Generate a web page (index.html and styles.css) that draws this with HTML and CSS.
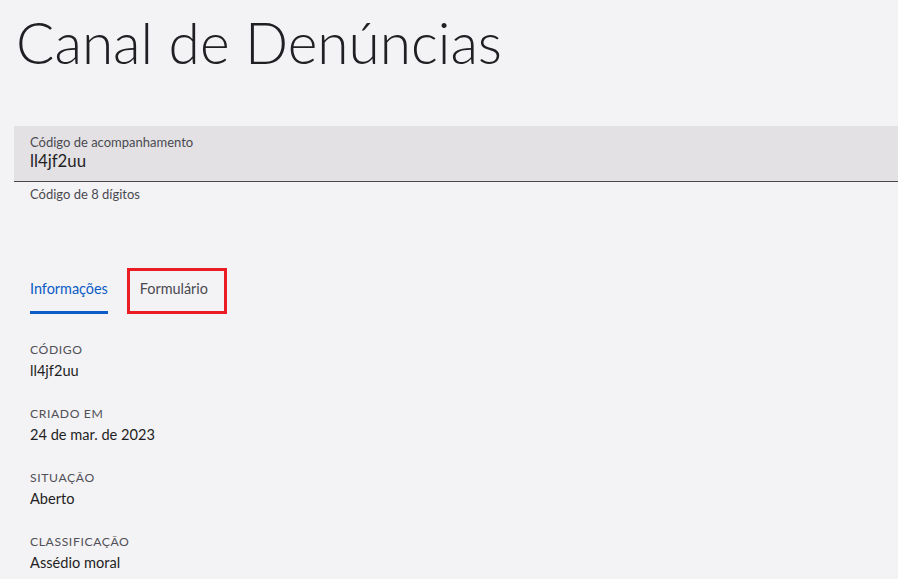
FILE: index.html
```html
<!DOCTYPE html>
<html lang="pt-BR">
<head>
    <meta charset="UTF-8">
    <meta name="viewport" content="width=device-width, initial-scale=1.0">
    <title>Canal de Denúncias</title>
    <link rel="stylesheet" href="styles.css">
</head>
<body>
    <div class="page">
        <h1 class="title">Canal de Denúncias</h1>

        <div class="field">
            <div class="field-box">
                <label class="field-label" for="codigo">Código de acompanhamento</label>
                <input id="codigo" class="field-input" type="text" value="ll4jf2uu">
            </div>
            <div class="field-help">Código de 8 dígitos</div>
        </div>

        <div class="tabs">
            <div class="tab tab-active">Informações</div>
            <div class="tab tab-marked">Formulário</div>
        </div>

        <div class="info">
            <div class="info-item">
                <div class="info-label">Código</div>
                <div class="info-value">ll4jf2uu</div>
            </div>
            <div class="info-item">
                <div class="info-label">Criado em</div>
                <div class="info-value">24 de mar. de 2023</div>
            </div>
            <div class="info-item">
                <div class="info-label">Situação</div>
                <div class="info-value">Aberto</div>
            </div>
            <div class="info-item">
                <div class="info-label">Classificação</div>
                <div class="info-value">Assédio moral</div>
            </div>
        </div>
    </div>
</body>
</html>
```

FILE: styles.css
```css
body {
    margin: 0;
    background: #f3f2f5;
    font-family: 'Lato', 'Liberation Sans', sans-serif;
    color: #1f1f23;
}

.page {
    padding: 0 0 0 14px;
}

.title {
    margin: 0;
    padding: 7px 0 0 2px;
    font-size: 56.8px;
    font-weight: 300;
    line-height: 70px;
    color: #202024;
}

.field {
    margin-top: 49px;
}

.field-box {
    background: #e3e1e4;
    border-bottom: 1px solid #48474c;
    padding: 8px 16px 9px;
    display: flex;
    flex-direction: column;
}

.field-label {
    font-size: 13px;
    line-height: 16px;
    color: #4a4a50;
}

.field-input {
    border: none;
    background: transparent;
    padding: 0;
    margin: 0;
    font-family: inherit;
    font-size: 16.8px;
    line-height: 22px;
    height: 22px;
    color: #1f1f23;
    outline: none;
}

.field-help {
    padding: 4px 16px 0;
    font-size: 13px;
    line-height: 16px;
    color: #4a4a50;
}

.tabs {
    display: flex;
    align-items: flex-start;
    gap: 19px;
    margin-top: 65px;
    padding-left: 16px;
}

.tab {
    font-size: 14.4px;
    line-height: 20px;
    padding: 12px 0;
    color: #4a4a50;
}

.tab-active {
    color: #0b5cc6;
    border-bottom: 3px solid #0b5cc6;
    padding-bottom: 12px;
}

.tab-marked {
    border: 3px solid #ec1c24;
    padding: 8px 16px 12px 10px;
    margin-top: 1px;
}

.info {
    padding: 26px 0 0 16px;
}

.info-item {
    margin-bottom: 22px;
}

.info-label {
    font-size: 12.2px;
    line-height: 20px;
    text-transform: uppercase;
    letter-spacing: 0.6px;
    color: #505056;
}

.info-value {
    font-size: 14.6px;
    line-height: 22px;
    color: #1f1f23;
}
```
